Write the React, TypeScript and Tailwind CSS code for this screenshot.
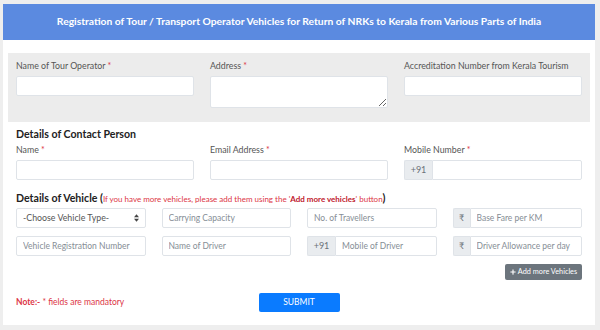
import { FaPlus } from "react-icons/fa";

const font = { fontFamily: 'Lato, "Open Sans", sans-serif' };

const Req = () => <span className="text-[#dc3545]">*</span>;

const Label = ({ text, req }: { text: string; req?: boolean }) => (
    <div className="mb-[3px] h-[14px] whitespace-nowrap text-[8.8px] leading-[14px] text-[#555]">
        {text} {req && <Req />}
    </div>
);

const Input = ({ placeholder, className = "" }: { placeholder?: string; className?: string }) => (
    <input
        placeholder={placeholder}
        className={`block h-[20px] w-full min-w-0 rounded-[2px] border border-[#dfe3e8] bg-white px-[6px] text-[8.5px] text-[#495057] placeholder:text-[#868e96] outline-none ${className}`}
    />
);

const Group = ({ prefix, placeholder, wide }: { prefix: string; placeholder: string; wide?: boolean }) => (
    <div className="flex h-[20px] w-full">
        <div
            className={`flex shrink-0 items-center justify-center rounded-l-[2px] border border-r-0 border-[#dfe3e8] bg-[#e9ecef] text-[9px] text-[#6b7278] ${wide ? "w-[28px]" : "w-[17px]"}`}
        >
            {prefix}
        </div>
        <input
            placeholder={placeholder}
            className="block h-[20px] w-full min-w-0 rounded-r-[2px] border border-[#dfe3e8] bg-white px-[6px] text-[8.5px] placeholder:text-[#868e96] outline-none"
        />
    </div>
);

const App = () => {
    return (
        <div className="h-[330px] bg-[#eeeeee] pl-[3px] pr-[5px] pt-[4px]" style={font}>
            <div className="h-[321px] bg-white">
                {/* header */}
                <div className="flex h-[36px] items-center justify-center bg-[#5b8ae0] text-[10.3px] font-bold text-white">
                    Registration of Tour / Transport Operator Vehicles for Return of NRKs to Kerala from Various Parts of India
                </div>

                <div className="px-[5px]">
                    {/* operator */}
                    <div className="mt-[13px] grid h-[69px] grid-cols-3 gap-x-[16px] bg-[#ececec] px-[8px] pt-[6px]">
                        <div>
                            <Label text="Name of Tour Operator" req />
                            <Input />
                        </div>
                        <div>
                            <Label text="Address" req />
                            <textarea className="block h-[32px] w-full resize-y rounded-[2px] border border-[#dfe3e8] bg-white outline-none" />
                        </div>
                        <div>
                            <Label text="Accreditation Number from Kerala Tourism" />
                            <Input />
                        </div>
                    </div>

                    <div className="px-[8px]">
                        {/* contact */}
                        <div className="mt-[5px] h-[14px] text-[10.6px] font-bold leading-[14px] text-[#222]">Details of Contact Person</div>
                        <div className="mt-[2px] grid grid-cols-3 gap-x-[16px]">
                            <div>
                                <Label text="Name" req />
                                <Input />
                            </div>
                            <div>
                                <Label text="Email Address" req />
                                <Input />
                            </div>
                            <div>
                                <Label text="Mobile Number" req />
                                <Group prefix="+91" placeholder="" wide />
                            </div>
                        </div>

                        {/* vehicle */}
                        <div className="mt-[11px] h-[14px] whitespace-nowrap text-[10.6px] font-bold leading-[14px] text-[#222]">
                            Details of Vehicle (
                            <span className="text-[8px] font-normal text-[#dc3545]">
                                If you have more vehicles, please add them using the '<b className="text-[#c0182d]">Add more vehicles</b>' button
                            </span>
                            )
                        </div>
                        <div className="mt-[3px] grid grid-cols-4 gap-x-[16px] gap-y-[8px]">
                            <div className="relative">
                                <select className="block h-[20px] w-full appearance-none rounded-[2px] border border-[#dfe3e8] bg-white px-[6px] text-[8.8px] text-[#555] outline-none">
                                    <option>-Choose Vehicle Type-</option>
                                </select>
                                <svg className="pointer-events-none absolute right-[7px] top-[6px]" width="5" height="8" viewBox="0 0 5 8">
                                    <path d="M0 3.3 L2.5 0.3 L5 3.3 Z M0 4.7 L2.5 7.7 L5 4.7 Z" fill="#444" />
                                </svg>
                            </div>
                            <Input placeholder="Carrying Capacity" />
                            <Input placeholder="No. of Travellers" />
                            <Group prefix="₹" placeholder="Base Fare per KM" />
                            <Input placeholder="Vehicle Registration Number" />
                            <Input placeholder="Name of Driver" />
                            <Group prefix="+91" placeholder="Mobile of Driver" wide />
                            <Group prefix="₹" placeholder="Driver Allowance per day" />
                        </div>

                        <div className="mt-[8px] flex justify-end">
                            <button className="flex h-[16px] w-[77px] items-center justify-center gap-[2px] whitespace-nowrap rounded-[2px] bg-[#6c757d] text-[7.3px] text-white">
                                <FaPlus className="h-[6px] w-[6px]" />
                                Add more Vehicles
                            </button>
                        </div>

                        <div className="mt-[13px] grid grid-cols-[1fr_auto_1fr] items-center">
                            <div className="text-[8.5px] text-[#dc3545]">
                                <b>Note:-</b> * fields are mandatory
                            </div>
                            <button className="h-[19px] w-[81px] rounded-[2px] bg-[#0a7bff] text-[8.5px] text-white">SUBMIT</button>
                            <div />
                        </div>
                    </div>
                </div>
            </div>
        </div>
    );
};

export default App;
